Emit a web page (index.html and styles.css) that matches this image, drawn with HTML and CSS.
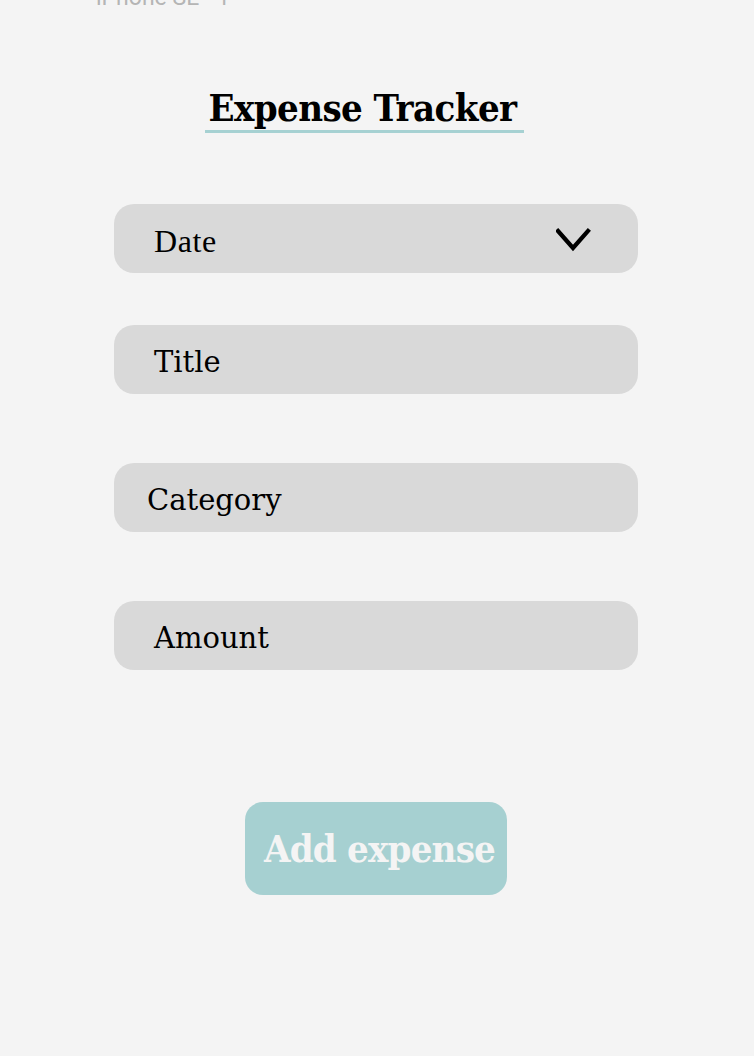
FILE: index.html
```html
<!DOCTYPE html>
<html>
<head>
<meta charset="utf-8">
<link rel="stylesheet" href="styles.css">
</head>
<body>
<div class="frame-label">iPhone SE - 1</div>
<div class="page">
  <div class="title-wrap">
    <h1 class="title">Expense Tracker</h1>
  </div>
  <form class="form">
    <div class="field field-date">
      <span class="field-text date">Date</span>
      <svg class="chevron" width="36" height="26" viewBox="0 0 36 26"><path d="M2 3 L17 20 L32 3" fill="none" stroke="#000" stroke-width="4.2" stroke-linecap="square" stroke-linejoin="miter"/></svg>
    </div>
    <div class="field field-title"><span class="field-text">Title</span></div>
    <div class="field field-category"><span class="field-text cat">Category</span></div>
    <div class="field field-amount"><span class="field-text">Amount</span></div>
  </form>
  <div class="btn-row">
    <button class="btn" type="button">Add expense</button>
  </div>
</div>
</body>
</html>
```
FILE: styles.css
```css
html, body {
  margin: 0;
  padding: 0;
  background: #f4f4f4;
}
body {
  width: 754px;
  height: 1056px;
  overflow: hidden;
}
.frame-label {
  font-family: Roboto, "Liberation Sans", sans-serif;
  font-size: 23px;
  color: #b5b5b5;
  line-height: 24px;
  margin-top: -14px;
  padding-left: 96px;
}
.page {
  display: flex;
  flex-direction: column;
}
.title-wrap {
  display: flex;
  padding-left: 205px;
  margin-top: 76px;
}
.title {
  margin: 0;
  width: 319px;
  box-sizing: border-box;
  text-align: center;
  padding-right: 4px;
  font-family: "DejaVu Serif Condensed", "DejaVu Serif", serif;
  font-weight: bold;
  font-size: 38px;
  line-height: 44px;
  color: #000;
  border-bottom: 3px solid #a6d1d2;
  letter-spacing: -0.6px;
}
.form {
  display: flex;
  flex-direction: column;
  margin: 71px 0 0 114px;
  width: 524px;
}
.field {
  height: 69px;
  border-radius: 20px;
  background: #d9d9d9;
  display: flex;
  align-items: center;
  box-sizing: border-box;
  padding-left: 40px;
}
.field-title { margin-top: 52px; }
.field-category { margin-top: 69px; }
.field-amount { margin-top: 69px; }
.field-text {
  font-family: "DejaVu Serif", serif;
  font-size: 29px;
  color: #000;
  line-height: 1;
  margin-top: 6px;
}
.field-text.date {
  font-family: "Liberation Serif", "Times New Roman", serif;
  font-size: 32px;
  letter-spacing: 0.6px;
  margin-top: 4px;
}
.field-text.cat {
  margin-left: -7px;
}
.field-date {
  justify-content: space-between;
  padding-right: 46px;
}
.chevron {
  display: block;
  margin-top: 4px;
}
.btn-row {
  display: flex;
  padding-left: 245px;
  margin-top: 132px;
}
.btn {
  width: 262px;
  height: 93px;
  border: none;
  border-radius: 18px;
  background: #a6d0d1;
  color: #f4f4f4;
  font-family: "DejaVu Serif Condensed", "DejaVu Serif", serif;
  font-weight: bold;
  font-size: 38px;
  text-align: left;
  padding: 0 0 0 19px;
  white-space: nowrap;
  overflow: visible;
  letter-spacing: -0.8px;
}
```
